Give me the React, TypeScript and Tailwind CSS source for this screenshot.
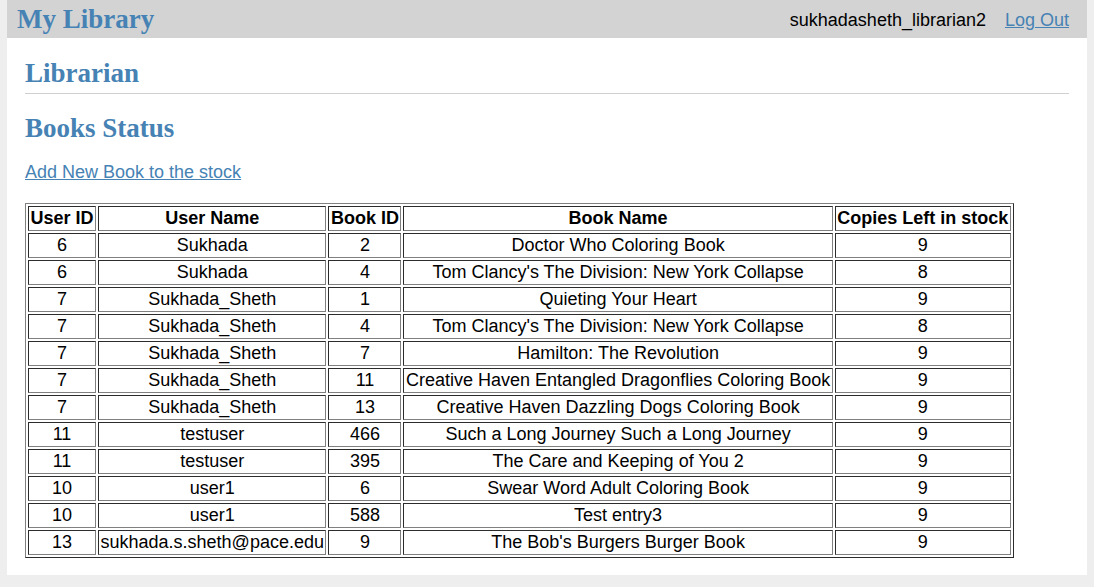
const rows: [number, string, number, string, number][] = [
  [6, "Sukhada", 2, "Doctor Who Coloring Book", 9],
  [6, "Sukhada", 4, "Tom Clancy's The Division: New York Collapse", 8],
  [7, "Sukhada_Sheth", 1, "Quieting Your Heart", 9],
  [7, "Sukhada_Sheth", 4, "Tom Clancy's The Division: New York Collapse", 8],
  [7, "Sukhada_Sheth", 7, "Hamilton: The Revolution", 9],
  [7, "Sukhada_Sheth", 11, "Creative Haven Entangled Dragonflies Coloring Book", 9],
  [7, "Sukhada_Sheth", 13, "Creative Haven Dazzling Dogs Coloring Book", 9],
  [11, "testuser", 466, "Such a Long Journey Such a Long Journey", 9],
  [11, "testuser", 395, "The Care and Keeping of You 2", 9],
  [10, "user1", 6, "Swear Word Adult Coloring Book", 9],
  [10, "user1", 588, "Test entry3", 9],
  [13, "sukhada.s.sheth@pace.edu", 9, "The Bob's Burgers Burger Book", 9],
];

const headers = ["User ID", "User Name", "Book ID", "Book Name", "Copies Left in stock"];

const cell =
  "border border-[gray] [border-style:inset] px-[1.5px] py-px text-center leading-[21px] whitespace-nowrap";

export default function App() {
  return (
    <div className="min-h-[587px] bg-[#eeeeee] px-[7px] pb-[11px] font-['Liberation_Sans',Arial,sans-serif] text-[18px] leading-[1.15] text-black">
      <div className="bg-white">
        <header className="flex h-[38px] items-center justify-between bg-[#d3d3d3] pl-[10px] pr-[18px] pt-[2px]">
          <h1 className="font-['Liberation_Serif','Times_New_Roman',serif] text-[27px] font-bold text-[#4682b4]">
            My Library
          </h1>
          <div className="flex items-center gap-[19px]">
            <span>sukhadasheth_librarian2</span>
            <a href="#" className="text-[#4682b4] underline">
              Log Out
            </a>
          </div>
        </header>
        <main className="px-[18px] pb-[17px] pt-[20px]">
          <h2 className="font-['Liberation_Serif','Times_New_Roman',serif] text-[27px] font-bold text-[#4682b4]">
            Librarian
          </h2>
          <hr className="mt-[4px] border-t border-[#d0d0d0]" />
          <h2 className="mt-[19px] font-['Liberation_Serif','Times_New_Roman',serif] text-[27px] font-bold text-[#4682b4]">
            Books Status
          </h2>
          <a href="#" className="mt-[18px] inline-block text-[#4682b4] underline">
            Add New Book to the stock
          </a>
          <table className="mt-[20px] border-separate border-spacing-[2px] border border-[gray] [border-style:outset]">
            <thead>
              <tr>
                {headers.map((h) => (
                  <th key={h} className={`${cell} font-bold`}>
                    {h}
                  </th>
                ))}
              </tr>
            </thead>
            <tbody>
              {rows.map((r, i) => (
                <tr key={i}>
                  {r.map((v, j) => (
                    <td key={j} className={cell}>
                      {v}
                    </td>
                  ))}
                </tr>
              ))}
            </tbody>
          </table>
        </main>
      </div>
    </div>
  );
}
